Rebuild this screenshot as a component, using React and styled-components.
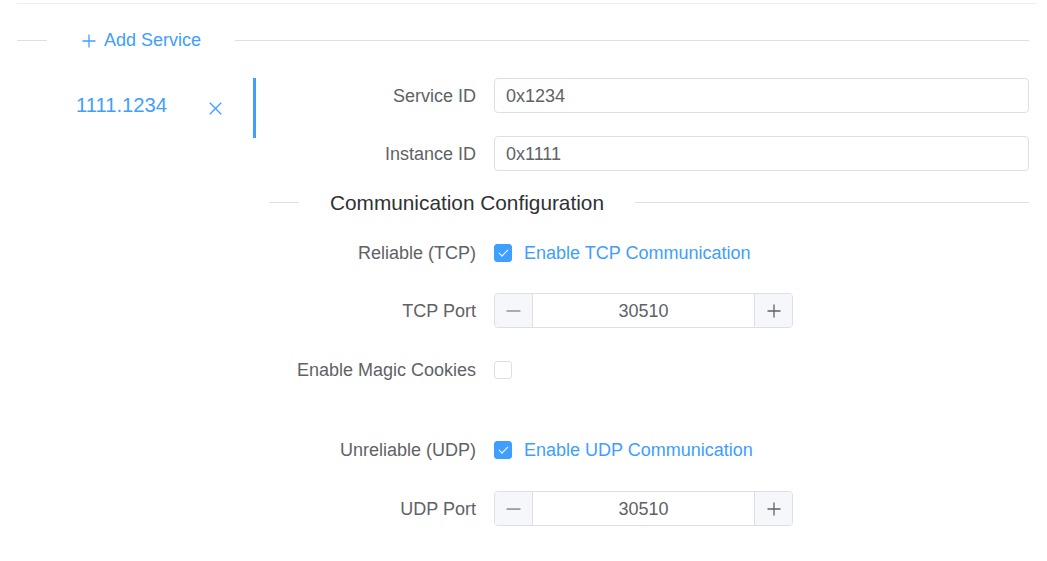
import React from 'react';
import styled, { createGlobalStyle } from 'styled-components';

const GlobalStyle = createGlobalStyle`
  body {
    margin: 0;
    background: #ffffff;
    font-family: "Liberation Sans", Arial, sans-serif;
  }
`;

const Page = styled.div`
  width: 1020px;
  margin: 3px 0 0 17px;
  border-top: 1px solid #ebeef5;
`;

const Inner = styled.div`
  padding-right: 8px;
`;

const Divider = styled.div`
  display: flex;
  align-items: center;
  height: ${(p) => p.h || 40}px;
  margin: ${(p) => p.m || '0'};

  &::before {
    content: '';
    width: 30px;
    height: 1px;
    background: #dcdfe6;
  }

  &::after {
    content: '';
    flex: 1;
    height: 1px;
    background: #dcdfe6;
  }
`;

const DividerText = styled.div`
  display: flex;
  align-items: center;
  padding: ${(p) => p.pad};
  font-size: ${(p) => p.size}px;
  color: ${(p) => p.color};
  white-space: nowrap;
`;

const PlusIcon = styled.svg`
  width: 14px;
  height: 14px;
  margin-right: 8px;
`;

const Main = styled.div`
  display: flex;
`;

const TabNav = styled.div`
  width: 239px;
  flex-shrink: 0;
`;

const TabItem = styled.div`
  position: relative;
  display: flex;
  align-items: center;
  height: 60px;
  padding: 0 0 5px 59px;
  box-sizing: border-box;
  color: #409eff;
  font-size: 20.2px;

  &::after {
    content: '';
    position: absolute;
    right: 0;
    top: 0;
    width: 3px;
    height: 60px;
    background: #409eff;
  }
`;

const CloseIcon = styled.svg`
  width: 13px;
  height: 13px;
  margin: 5px 0 0 42px;
`;

const Form = styled.div`
  flex: 1;
  padding-left: 13px;
`;

const Row = styled.div`
  display: flex;
  align-items: center;
  height: 35px;
  margin-top: ${(p) => p.mt ?? 23}px;
`;

const Label = styled.div`
  width: 207px;
  padding: 2px 18px 0 0;
  text-align: right;
  font-size: 18px;
  color: #606266;
  white-space: nowrap;
`;

const TextInput = styled.div`
  flex: 1;
  height: 35px;
  box-sizing: border-box;
  border: 1px solid #dcdfe6;
  border-radius: 4px;
  padding: 2px 11px 0;
  display: flex;
  align-items: center;
  font-size: 18px;
  color: #606266;
`;

const CheckLine = styled.div`
  display: flex;
  align-items: center;
  font-size: 18px;
  color: #409eff;
`;

const CheckText = styled.span`
  padding-top: 2px;
`;

const Box = styled.span`
  position: relative;
  width: 18px;
  height: 18px;
  box-sizing: border-box;
  border-radius: 3px;
  border: 1px solid ${(p) => (p.checked ? '#409eff' : '#dcdfe6')};
  background: ${(p) => (p.checked ? '#409eff' : '#ffffff')};
  margin-right: 12px;

  &::after {
    content: '';
    display: ${(p) => (p.checked ? 'block' : 'none')};
    position: absolute;
    left: 6px;
    top: 2.5px;
    width: 3.5px;
    height: 8px;
    border: 1px solid #ffffff;
    border-left: 0;
    border-top: 0;
    transform: rotate(45deg);
  }
`;

const NumberBox = styled.div`
  display: flex;
  width: 299px;
  height: 35px;
  box-sizing: border-box;
  border: 1px solid #dcdfe6;
  border-radius: 4px;
  overflow: hidden;
`;

const StepButton = styled.div`
  width: 37px;
  display: flex;
  align-items: center;
  justify-content: center;
  background: #f5f7fa;
  border-${(p) => (p.side === 'left' ? 'right' : 'left')}: 1px solid #dcdfe6;
`;

const NumberValue = styled.div`
  flex: 1;
  display: flex;
  align-items: center;
  justify-content: center;
  padding-top: 1px;
  font-size: 18px;
  color: #606266;
`;

const Plus = ({ color = '#409eff', size = 14 }) => (
  <svg width={size} height={size} viewBox="0 0 14 14">
    <path d="M7 0.5v13M0.5 7h13" stroke={color} strokeWidth="1.3" fill="none" />
  </svg>
);

const Minus = () => (
  <svg width="15" height="14" viewBox="0 0 15 14">
    <path d="M0.5 7h14" stroke="#606266" strokeWidth="1.2" fill="none" />
  </svg>
);

const NumberInput = ({ value }) => (
  <NumberBox>
    <StepButton side="left"><Minus /></StepButton>
    <NumberValue>{value}</NumberValue>
    <StepButton side="right"><Plus color="#606266" size={14} /></StepButton>
  </NumberBox>
);

const App = () => {
  return (
    <>
      <GlobalStyle />
      <Page>
        <Inner>
          <Divider h={40} m="16px 0 18px">
            <DividerText pad="1px 34px 0 35px" size={18} color="#409eff">
              <PlusIcon viewBox="0 0 14 14">
                <path d="M7 0.5v13M0.5 7h13" stroke="#409eff" strokeWidth="1.3" fill="none" />
              </PlusIcon>
              Add Service
            </DividerText>
          </Divider>
          <Main>
            <TabNav>
              <TabItem>
                1111.1234
                <CloseIcon viewBox="0 0 13 13">
                  <path d="M0.8 0.8l11.4 11.4M12.2 0.8L0.8 12.2" stroke="#409eff" strokeWidth="1.3" fill="none" />
                </CloseIcon>
              </TabItem>
            </TabNav>
            <Form>
              <Row mt={0}>
                <Label>Service ID</Label>
                <TextInput>0x1234</TextInput>
              </Row>
              <Row>
                <Label>Instance ID</Label>
                <TextInput>0x1111</TextInput>
              </Row>
              <Divider h={22} m="20px 0 22px">
                <DividerText pad="1px 31px 0" size={20.8} color="#303133">
                  Communication Configuration
                </DividerText>
              </Divider>
              <Row mt={0}>
                <Label>Reliable (TCP)</Label>
                <CheckLine><Box checked /><CheckText>Enable TCP Communication</CheckText></CheckLine>
              </Row>
              <Row>
                <Label>TCP Port</Label>
                <NumberInput value="30510" />
              </Row>
              <Row mt={24}>
                <Label>Enable Magic Cookies</Label>
                <CheckLine><Box /></CheckLine>
              </Row>
              <Row mt={45}>
                <Label>Unreliable (UDP)</Label>
                <CheckLine><Box checked /><CheckText>Enable UDP Communication</CheckText></CheckLine>
              </Row>
              <Row mt={24}>
                <Label>UDP Port</Label>
                <NumberInput value="30510" />
              </Row>
            </Form>
          </Main>
        </Inner>
      </Page>
    </>
  );
};

export default App;
